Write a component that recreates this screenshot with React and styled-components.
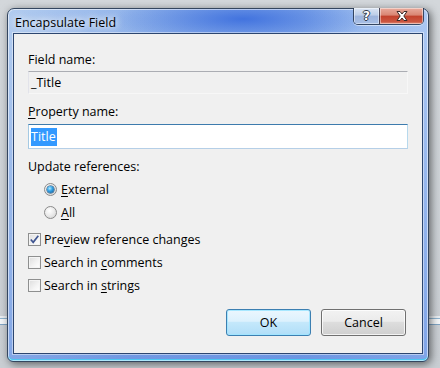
import React from 'react';
import styled, { createGlobalStyle } from 'styled-components';

const GlobalStyle = createGlobalStyle`
  html, body { margin: 0; padding: 0; }
  body {
    width: 440px; height: 368px; overflow: hidden;
    font-family: "Open Sans", "Noto Sans", sans-serif;
  }
`;

const Desktop = styled.div`
  width: 440px; height: 368px; box-sizing: border-box;
  padding: 8px 0 0 7px;
  background:
    linear-gradient(to bottom, transparent 316px, #e9edf1 316px, #e9edf1 318px, #8fb4d0 318px, #8fb4d0 319px, #f4f6f8 319px, #f4f6f8 324px, #7fa4c4 324px, #7fa4c4 325px, transparent 325px),
    linear-gradient(to bottom, #d3d7db, #c9ced3);
`;

const Window = styled.div`
  width: 422px; height: 354px; box-sizing: border-box;
  border: 1px solid #34465f;
  border-radius: 7px 7px 6px 6px;
  padding: 0 5px 7px 5px;
  display: flex; flex-direction: column;
  background:
    radial-gradient(ellipse 130px 26px at 235px 10px, rgba(62,112,222,0.95), rgba(62,112,222,0) 100%),
    linear-gradient(to bottom, rgba(255,255,255,0) 0%, rgba(60,110,215,0.4) 100%),
    linear-gradient(to right, #b2ccef 0%, #92b4ea 30%, #8cb0ea 70%, #adc9f3 100%);
  box-shadow:
    inset 0 0 0 1px rgba(255,255,255,0.55),
    inset 0 -2px 0 #4cc8f2,
    2px 2px 8px rgba(0,0,0,0.55);
`;

const TitleBar = styled.div`
  height: 24px; display: flex; align-items: flex-start;
`;

const Title = styled.div`
  font-size: 12.5px; line-height: 16px; color: #000;
  padding: 6px 0 0 2px;
  text-shadow: 0 0 6px #fff, 0 0 10px rgba(255,255,255,0.9);
`;

const CaptionGroup = styled.div`
  margin: -1px -1px 0 auto;
  display: flex; height: 17px; box-sizing: border-box;
  border: 1px solid rgba(35,50,75,0.85); border-top: 0;
  border-radius: 0 0 5px 5px; overflow: hidden;
  box-shadow: 0 1px 0 rgba(255,255,255,0.5);
`;

const CaptionButton = styled.div`
  width: ${p => p.$w}px; height: 100%;
  display: flex; align-items: center; justify-content: center;
  box-shadow: inset 0 0 0 1px rgba(255,255,255,0.45);
  background: ${p => p.$close
    ? 'linear-gradient(#e9ab9d 0%, #d98572 45%, #c2412c 50%, #cc5640 85%, #e08f7c 100%)'
    : 'linear-gradient(#dbe5f3 0%, #bccde8 45%, #9db4dc 50%, #a8bfe6 100%)'};
  & + & { border-left: 1px solid rgba(35,50,75,0.8); }
`;

const HelpGlyph = styled.span`
  font-family: "DejaVu Sans", sans-serif; font-weight: bold; font-size: 12px; line-height: 12px;
  color: #fff;
  text-shadow: 1px 0 #2c3848, -1px 0 #2c3848, 0 1px #2c3848, 0 -1px #2c3848;
`;

const Client = styled.div`
  flex: 1; background: #f0f0f0;
  border: 1px solid #2c4670;
  box-shadow: 0 0 0 1px rgba(255,255,255,0.45);
  padding: 18px 14px 0 14px;
  display: flex; flex-direction: column;
  font-size: 12.5px;
`;

const Label = styled.div`
  line-height: 16px; color: #000;
  margin-top: ${p => p.$mt || 0}px;
`;

const Key = styled.span` text-decoration: underline; text-underline-offset: 2px; `;

const TextBox = styled.div`
  height: ${p => p.$h}px; box-sizing: border-box;
  margin-top: ${p => p.$mt || 0}px;
  padding: 0 2px;
  line-height: ${p => p.$h - 2}px;
  background: ${p => p.$readOnly ? '#f0f0f0' : '#fff'};
  border: 1px solid;
  border-color: ${p => p.$focused
    ? '#3d7bad #b7d9ed #b5cfe7 #a4c9e3'
    : '#abadb3 #f7f7f7 #f7f7f7 #e2e3ea'};
  display: flex; align-items: center;
`;

const Selection = styled.span`
  background: #3399ff; color: #fff; line-height: 18px; padding-right: 1px;
`;

const OptionRow = styled.div`
  height: 23px; display: flex; align-items: center;
  padding-left: ${p => p.$indent || 0}px;
  margin-top: ${p => p.$mt || 0}px;
  color: #000;
`;

const Radio = styled.span`
  width: 13px; height: 13px; box-sizing: border-box; border-radius: 50%;
  border: 1px solid #8a8a8a;
  background: radial-gradient(circle at 40% 35%, #ffffff 0%, #ececec 45%, #cfcfcf 100%);
  display: flex; align-items: center; justify-content: center;
  margin-right: 4px; flex: none;
  &::after {
    content: ''; display: ${p => p.$checked ? 'block' : 'none'};
    width: 7px; height: 7px; border-radius: 50%;
    background: radial-gradient(circle at 40% 35%, #b5ecff 0%, #35a3e6 40%, #0c4f88 100%);
    box-shadow: 0 0 0 0.5px #0a3d6b;
  }
`;

const Check = styled.span`
  width: 13px; height: 13px; box-sizing: border-box;
  border: 1px solid #8e8f8f;
  background: linear-gradient(135deg, #dcdcdc 0%, #f4f4f4 60%, #ffffff 100%);
  box-shadow: inset 0 0 0 1px #f4f4f4;
  margin-right: 3px; flex: none;
  display: flex; align-items: center; justify-content: center;
`;

const ButtonRow = styled.div`
  display: flex; justify-content: flex-end; gap: 10px;
  margin-top: 12px; padding-right: 2px;
`;

const Button = styled.div`
  width: 85px; height: 27px; box-sizing: border-box;
  border-radius: 3px;
  border: 1px solid ${p => p.$default ? '#3c7fb1' : '#707070'};
  background: ${p => p.$default
    ? 'linear-gradient(#ebf7fe 0%, #dcf1fd 45%, #c4e8fb 50%, #b0def8 100%)'
    : 'linear-gradient(#f2f2f2 0%, #ebebeb 45%, #dddddd 50%, #cfcfcf 100%)'};
  box-shadow: inset 0 0 0 1px ${p => p.$default ? 'rgba(160,230,255,0.9)' : 'rgba(255,255,255,0.75)'};
  display: flex; align-items: center; justify-content: center;
  color: #000;
`;

const CloseX = () => (
  <svg width="16" height="12" viewBox="0 0 16 12">
    <path d="M3 1.5 L6 1.5 L8 4 L10 1.5 L13 1.5 L9.8 6 L13 10.5 L10 10.5 L8 8 L6 10.5 L3 10.5 L6.2 6 Z"
      fill="#fff" stroke="#3b2a28" strokeWidth="1" strokeLinejoin="round" />
  </svg>
);

const CheckMark = () => (
  <svg width="11" height="11" viewBox="0 0 11 11">
    <path d="M1.8 5.5 L4.2 8.3 L9.3 1.8" fill="none" stroke="#3f5591" strokeWidth="1.7" />
  </svg>
);

export default function App() {
  return (
    <>
      <GlobalStyle />
      <Desktop>
        <Window>
          <TitleBar>
            <Title>Encapsulate Field</Title>
            <CaptionGroup>
              <CaptionButton $w={25}><HelpGlyph>?</HelpGlyph></CaptionButton>
              <CaptionButton $w={43} $close><CloseX /></CaptionButton>
            </CaptionGroup>
          </TitleBar>
          <Client>
            <Label>Field name:</Label>
            <TextBox $h={23} $mt={3} $readOnly>_Title</TextBox>
            <Label $mt={10}><Key>P</Key>roperty name:</Label>
            <TextBox $h={25} $mt={4} $focused><Selection>Title</Selection></TextBox>
            <Label $mt={10}>Update references:</Label>
            <OptionRow $indent={16} $mt={3}><Radio $checked /><span><Key>E</Key>xternal</span></OptionRow>
            <OptionRow $indent={16}><Radio /><span><Key>A</Key>ll</span></OptionRow>
            <OptionRow $mt={4}><Check><CheckMark /></Check><span>Pre<Key>v</Key>iew reference changes</span></OptionRow>
            <OptionRow><Check /><span>Search in <Key>c</Key>omments</span></OptionRow>
            <OptionRow><Check /><span>Search in <Key>s</Key>trings</span></OptionRow>
            <ButtonRow>
              <Button $default>OK</Button>
              <Button>Cancel</Button>
            </ButtonRow>
          </Client>
        </Window>
      </Desktop>
    </>
  );
}
